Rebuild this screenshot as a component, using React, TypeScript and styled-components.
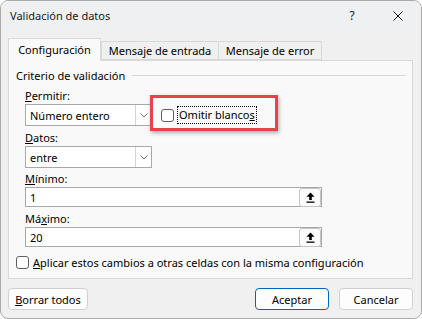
import React from "react";
import styled, { createGlobalStyle } from "styled-components";

const GlobalStyle = createGlobalStyle`
  html, body { margin: 0; padding: 0; background: #ffffff; }
  body { font-family: "Noto Sans", "DejaVu Sans", sans-serif; font-size: 11px; color: #000; }
  * { box-sizing: border-box; }
`;

const Window = styled.div`
  width: 422px;
  height: 319px;
  border: 1px solid #ababab;
  border-radius: 8px;
  background: #f0f0f0;
  display: flex;
  flex-direction: column;
  overflow: hidden;
`;

const TitleBar = styled.div`
  height: 29px;
  display: flex;
  align-items: center;
  padding-left: 9px;
  background: #eff0f1;
`;

const Title = styled.div`
  flex: 1;
  font-size: 11px;
  color: #1a1a1a;
`;

const TitleButton = styled.div`
  width: 46px;
  height: 29px;
  display: flex;
  align-items: center;
  justify-content: center;
  font-size: 12px;
  color: #1a1a1a;
`;

const Body = styled.div`
  padding: 8px 8px 0 7px;
  display: flex;
  flex-direction: column;
`;

const Tabs = styled.div`
  display: flex;
  height: 22px;
  align-items: flex-end;
  position: relative;
  z-index: 1;
`;

const Tab = styled.div<{ $w: number; $active?: boolean }>`
  width: ${(p) => p.$w}px;
  height: ${(p) => (p.$active ? 23 : 19)}px;
  margin-bottom: ${(p) => (p.$active ? -1 : 0)}px;
  margin-right: ${(p) => (p.$active ? 0 : -1)}px;
  align-self: flex-${(p) => (p.$active ? "start" : "end")};
  border: 1px solid #d9d9d9;
  border-bottom: ${(p) => (p.$active ? "none" : "1px solid #d9d9d9")};
  background: ${(p) => (p.$active ? "#f9f9f9" : "#f0f0f0")};
  display: flex;
  align-items: center;
  justify-content: center;
  padding-bottom: ${(p) => (p.$active ? 2 : 0)}px;
  font-size: 11px;
  white-space: nowrap;
  color: #000;
`;

const Panel = styled.div`
  height: 219px;
  border: 1px solid #d9d9d9;
  background: #f9f9f9;
  position: relative;
  display: flex;
  flex-direction: column;
`;

const GroupHeader = styled.div`
  margin-top: 6px;
  height: 16px;
  padding-left: 7px;
  padding-right: 6px;
  display: flex;
  align-items: center;
  gap: 7px;
  &::after {
    content: "";
    flex: 1;
    height: 1px;
    background: #d9d9d9;
  }
`;

const Fields = styled.div`
  padding-left: 16px;
  display: flex;
  flex-direction: column;
`;

const Label = styled.div<{ $mt: number }>`
  margin-top: ${(p) => p.$mt}px;
  height: 16px;
  line-height: 16px;
  font-size: 11px;
`;

const Row = styled.div`
  display: flex;
  align-items: center;
  position: relative;
`;

const Select = styled.div`
  width: 127px;
  height: 22px;
  border: 1px solid #a8a8a8;
  background: #ffffff;
  display: flex;
  align-items: stretch;
`;

const SelectValue = styled.div`
  flex: 1;
  padding-left: 4px;
  display: flex;
  align-items: center;
  font-size: 11px;
`;

const SelectButton = styled.div`
  width: 16px;
  border-left: 1px solid #d4d4d4;
  display: flex;
  align-items: center;
  justify-content: center;
`;

const Input = styled.div`
  width: 297px;
  height: 20px;
  border: 1px solid #a8a8a8;
  background: #ffffff;
  display: flex;
  align-items: center;
  justify-content: space-between;
  padding-left: 4px;
  padding-right: 0;
  font-size: 11px;
`;

const SpinButton = styled.div`
  width: 22px;
  height: 19px;
  margin-top: 1px;
  border: 1px solid #c4c4c4;
  border-radius: 3px;
  background: #fbfbfb;
  display: flex;
  align-items: center;
  justify-content: center;
`;

const CheckRow = styled.label<{ $ml: number }>`
  display: flex;
  align-items: center;
  margin-left: ${(p) => p.$ml}px;
  font-size: 11px;
  gap: 4px;
`;

const Box = styled.span`
  width: 13px;
  height: 13px;
  border: 1px solid #5f5f5f;
  border-radius: 3px;
  background: #ffffff;
  display: inline-block;
`;

const FocusText = styled.span`
  outline: 1px dotted #000;
  outline-offset: 0;
  padding: 0 1px;
  line-height: 16px;
`;

const Highlight = styled.div`
  position: absolute;
  left: 125px;
  top: -9px;
  width: 128px;
  height: 36px;
  border: 3px solid #e8434b;
  box-shadow: 1px 2px 4px rgba(0, 0, 0, 0.3);
  pointer-events: none;
`;

const BottomCheck = styled.div`
  margin-top: 7px;
  height: 16px;
  padding-left: 7px;
  display: flex;
  align-items: center;
`;

const Footer = styled.div`
  margin-top: 9px;
  display: flex;
  align-items: center;
`;

const Button = styled.div<{ $w: number; $primary?: boolean }>`
  width: ${(p) => p.$w}px;
  height: 22px;
  border: 1px solid ${(p) => (p.$primary ? "#0067c0" : "#d0d0d0")};
  border-radius: 4px;
  background: #fdfdfd;
  display: flex;
  align-items: center;
  justify-content: center;
  font-size: 11px;
`;

const Spacer = styled.div`
  flex: 1;
`;

const ButtonGap = styled.div`
  width: 10px;
`;

const Chevron = () => (
  <svg width="8" height="5" viewBox="0 0 8 5">
    <path d="M0.5 0.5 L4 4 L7.5 0.5" fill="none" stroke="#707070" strokeWidth="1" />
  </svg>
);

const UpArrow = () => (
  <svg width="9" height="11" viewBox="0 0 9 11">
    <path d="M4.5 0.5 L8.5 4.8 L5.8 4.8 L5.8 8 L3.2 8 L3.2 4.8 L0.5 4.8 Z" fill="#000" />
    <rect x="0.5" y="9.5" width="8" height="1.3" fill="#000" />
  </svg>
);

const CloseIcon = () => (
  <svg width="10" height="10" viewBox="0 0 10 10">
    <path d="M0.5 0.5 L9.5 9.5 M9.5 0.5 L0.5 9.5" stroke="#1a1a1a" strokeWidth="1" />
  </svg>
);

export default function App() {
  return (
    <>
      <GlobalStyle />
      <Window>
        <TitleBar>
          <Title>Validación de datos</Title>
          <TitleButton>?</TitleButton>
          <TitleButton>
            <CloseIcon />
          </TitleButton>
        </TitleBar>
        <Body>
          <Tabs>
            <Tab $w={93} $active>Configuración</Tab>
            <Tab $w={118}>Mensaje de entrada</Tab>
            <Tab $w={104}>Mensaje de error</Tab>
          </Tabs>
          <Panel>
            <GroupHeader>Criterio de validación</GroupHeader>
            <Fields>
              <Label $mt={5}>
                <u>P</u>ermitir:
              </Label>
              <Row>
                <Select>
                  <SelectValue>Número entero</SelectValue>
                  <SelectButton>
                    <Chevron />
                  </SelectButton>
                </Select>
                <CheckRow $ml={9}>
                  <Box />
                  <FocusText>
                    Omitir blanco<u>s</u>
                  </FocusText>
                </CheckRow>
                <Highlight />
              </Row>
              <Label $mt={4}>
                <u>D</u>atos:
              </Label>
              <Select>
                <SelectValue>entre</SelectValue>
                <SelectButton>
                  <Chevron />
                </SelectButton>
              </Select>
              <Label $mt={3}>
                <u>M</u>ínimo:
              </Label>
              <Input>
                1
                <SpinButton>
                  <UpArrow />
                </SpinButton>
              </Input>
              <Label $mt={4}>
                Má<u>x</u>imo:
              </Label>
              <Input>
                20
                <SpinButton>
                  <UpArrow />
                </SpinButton>
              </Input>
            </Fields>
            <BottomCheck>
              <CheckRow $ml={0}>
                <Box />
                <span>
                  <u>A</u>plicar estos cambios a otras celdas con la misma configuración
                </span>
              </CheckRow>
            </BottomCheck>
          </Panel>
          <Footer>
            <Button $w={80}>
              <span>
                <u>B</u>orrar todos
              </span>
            </Button>
            <Spacer />
            <Button $w={74} $primary>
              Aceptar
            </Button>
            <ButtonGap />
            <Button $w={74}>Cancelar</Button>
          </Footer>
        </Body>
      </Window>
    </>
  );
}
